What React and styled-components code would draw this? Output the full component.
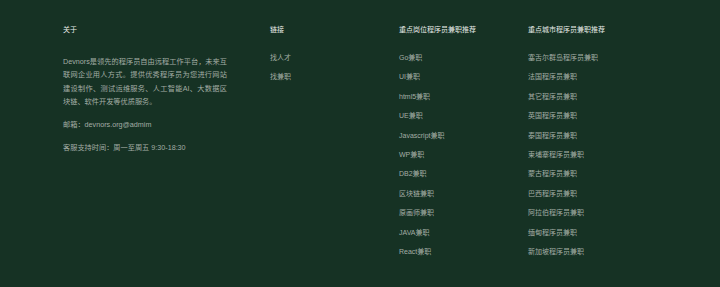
import React from 'react';
import styled, { createGlobalStyle } from 'styled-components';

const GlobalStyle = createGlobalStyle`
  html, body {
    margin: 0;
    padding: 0;
    background: #163224;
  }
  body {
    font-family: "Liberation Sans", "Noto Sans CJK SC", sans-serif;
  }
`;

const Footer = styled.footer`
  height: 287px;
  box-sizing: border-box;
  background: #163224;
  padding: 23px 63px 0;
`;

const Grid = styled.div`
  display: grid;
  grid-template-columns: 207px 129px 129px 129px;
`;

const Column = styled.div`
  display: flex;
  flex-direction: column;
`;

const Title = styled.h4`
  margin: 0 0 11px;
  font-size: 7px;
  line-height: 14px;
  font-weight: normal;
  color: #e8ece8;
`;

const Paragraph = styled.p`
  margin: ${(p) => p.$top || 0}px 0 0;
  width: 164px;
  font-size: 7.2px;
  line-height: 13.4px;
  color: #a3ada5;
  text-align: justify;
`;

const LinkList = styled.ul`
  margin: 0;
  padding: 0;
  list-style: none;
`;

const LinkItem = styled.li`
  font-size: 7px;
  line-height: 19.4px;
  color: #a3ada5;
  white-space: nowrap;
`;

const jobs = [
  'Go兼职', 'UI兼职', 'html5兼职', 'UE兼职', 'Javascript兼职', 'WP兼职',
  'DB2兼职', '区块链兼职', '原画师兼职', 'JAVA兼职', 'React兼职',
];

const cities = [
  '塞舌尔群岛程序员兼职', '法国程序员兼职', '其它程序员兼职', '英国程序员兼职',
  '泰国程序员兼职', '柬埔寨程序员兼职', '蒙古程序员兼职', '巴西程序员兼职',
  '阿拉伯程序员兼职', '缅甸程序员兼职', '新加坡程序员兼职',
];

const App = () => {
  return (
    <>
      <GlobalStyle />
      <Footer>
        <Grid>
          <Column>
            <Title>关于</Title>
            <Paragraph $top={7}>
              Devnors是领先的程序员自由远程工作平台，未来互联网企业用人方式。提供优秀程序员为您进行网站建设制作、测试运维服务、人工智能AI、大数据区块链、软件开发等优质服务。
            </Paragraph>
            <Paragraph $top={9}>邮箱：devnors.org@admim</Paragraph>
            <Paragraph $top={9.6}>客服支持时间：周一至周五 9:30-18:30</Paragraph>
          </Column>
          <Column>
            <Title>链接</Title>
            <LinkList>
              <LinkItem>找人才</LinkItem>
              <LinkItem>找兼职</LinkItem>
            </LinkList>
          </Column>
          <Column>
            <Title>重点岗位程序员兼职推荐</Title>
            <LinkList>
              {jobs.map((j) => (
                <LinkItem key={j}>{j}</LinkItem>
              ))}
            </LinkList>
          </Column>
          <Column>
            <Title>重点城市程序员兼职推荐</Title>
            <LinkList>
              {cities.map((c) => (
                <LinkItem key={c}>{c}</LinkItem>
              ))}
            </LinkList>
          </Column>
        </Grid>
      </Footer>
    </>
  );
};

export default App;
